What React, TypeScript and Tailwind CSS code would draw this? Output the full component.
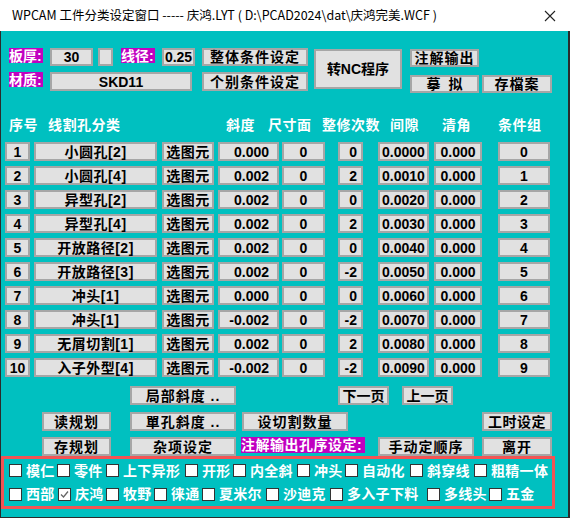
import React, { ReactNode } from "react";

const FONT = "font-['Liberation_Sans','Noto_Sans_CJK_SC',sans-serif]";

const Btn = ({ cls = "", children }: { cls?: string; children?: ReactNode }) => (
  <div
    className={`flex items-center justify-center shrink-0 bg-[#e1e1e1] border-2 border-[#a6a6a6] text-black font-bold text-[14px] leading-none whitespace-pre ${cls}`}
  >
    {children}
  </div>
);

const Tag = ({ cls = "", children }: { cls?: string; children?: ReactNode }) => (
  <div
    className={`flex items-center shrink-0 overflow-hidden whitespace-nowrap bg-[#c000c0] text-white font-bold text-[14px] leading-none h-[15px] ${cls}`}
  >
    {children}
  </div>
);

const rows = [
  ["1", "小圆孔[2]", "0.000", "0", "0", "0.0000", "0.000", "0"],
  ["2", "小圆孔[4]", "0.002", "0", "2", "0.0010", "0.000", "1"],
  ["3", "异型孔[2]", "0.002", "0", "0", "0.0020", "0.000", "2"],
  ["4", "异型孔[4]", "0.002", "0", "2", "0.0030", "0.000", "3"],
  ["5", "开放路径[2]", "0.002", "0", "0", "0.0040", "0.000", "4"],
  ["6", "开放路径[3]", "0.002", "0", "-2", "0.0050", "0.000", "5"],
  ["7", "冲头[1]", "0.000", "0", "0", "0.0060", "0.000", "6"],
  ["8", "冲头[1]", "-0.002", "0", "-2", "0.0070", "0.000", "7"],
  ["9", "无屑切割[1]", "0.002", "0", "2", "0.0080", "0.000", "8"],
  ["10", "入子外型[4]", "-0.002", "0", "-2", "0.0090", "0.000", "9"],
];

const headers = [
  { t: "序号", cls: "ml-[8px] w-[39px]" },
  { t: "线割孔分类", cls: "w-[178px]" },
  { t: "斜度", cls: "w-[42px]" },
  { t: "尺寸面", cls: "w-[54px]" },
  { t: "整修次数", cls: "w-[68px]" },
  { t: "间隙", cls: "w-[52px]" },
  { t: "清角", cls: "w-[56px]" },
  { t: "条件组", cls: "w-[60px]" },
];

const opts1 = [
  { t: "模仁", cls: "w-[48px]" },
  { t: "零件", cls: "w-[49px]" },
  { t: "上下异形", cls: "w-[79px]" },
  { t: "开形", cls: "w-[48px]" },
  { t: "内全斜", cls: "w-[64px]" },
  { t: "冲头", cls: "w-[48px]" },
  { t: "自动化", cls: "w-[65px]" },
  { t: "斜穿线", cls: "w-[64px]" },
  { t: "粗精一体", cls: "" },
];

const opts2 = [
  { t: "西部", cls: "w-[49px]" },
  { t: "庆鸿", cls: "w-[48px]", on: true },
  { t: "牧野", cls: "w-[48px]" },
  { t: "徕通", cls: "w-[48px]" },
  { t: "夏米尔", cls: "w-[64px]" },
  { t: "沙迪克", cls: "w-[64px]" },
  { t: "多入子下料", cls: "w-[97px]" },
  { t: "多线头", cls: "w-[62px]" },
  { t: "五金", cls: "" },
];

const Check = ({ t, cls, on }: { t: string; cls: string; on?: boolean }) => (
  <div className={`flex items-center shrink-0 ${cls}`}>
    <div className="w-[13px] h-[13px] bg-white border border-[#333] flex items-center justify-center">
      {on && (
        <svg width="11" height="11" viewBox="0 0 11 11">
          <polyline points="2,5.5 4.5,8 9,2.5" fill="none" stroke="#666" strokeWidth="1.3" />
        </svg>
      )}
    </div>
    <span className="ml-[4px] text-white font-bold text-[14px] leading-none tracking-[0.3px] whitespace-nowrap">{t}</span>
  </div>
);

export default function App() {
  return (
    <div className={`w-[570px] h-[521px] bg-white flex flex-col ${FONT}`}>
      <header className="h-[31px] shrink-0 flex items-center justify-between pl-[12px] pr-[14px] bg-white">
        <span className="text-[12.5px] text-black font-['Noto_Sans_CJK_SC',sans-serif]">
          WPCAM 工件分类设定窗口 ----- 庆鸿.LYT ( D:\PCAD2024\dat\庆鸿完美.WCF )
        </span>
        <svg width="12" height="12" viewBox="0 0 12 12">
          <path d="M1 1 L11 11 M11 1 L1 11" stroke="#222" strokeWidth="1.1" />
        </svg>
      </header>

      <main className="h-[487px] shrink-0 bg-[#00c0c0] border-l border-r-2 border-b border-[#2b2b2b] flex flex-col">
        {/* top settings */}
        <section className="flex items-start mt-[17px]">
          <div className="ml-[8px] flex flex-col">
            <div className="flex items-start">
              <Tag cls="w-[34px]">板厚:</Tag>
              <Btn cls="ml-[7px] w-[43px] h-[18px]">30</Btn>
              <Btn cls="ml-[5px] w-[15px] h-[18px]" />
              <Tag cls="ml-[8px] w-[34px]">线径:</Tag>
              <Btn cls="ml-[7px] w-[33px] h-[18px]">0.25</Btn>
              <Btn cls="ml-[7px] w-[106px] h-[18px] tracking-[1px]">整体条件设定</Btn>
            </div>
            <div className="flex items-start mt-[6px]">
              <Tag cls="w-[34px]">材质:</Tag>
              <Btn cls="ml-[7px] w-[142px] h-[19px]">SKD11</Btn>
              <Btn cls="ml-[10px] w-[106px] h-[19px] tracking-[1px]">个别条件设定</Btn>
            </div>
          </div>
          <Btn cls="ml-[6px] mt-[1px] w-[88px] h-[40px]">转NC程序</Btn>
          <div className="ml-[8px] mt-[1px] flex flex-col">
            <Btn cls="w-[69px] h-[18px] tracking-[1px]">注解输出</Btn>
            <div className="flex mt-[8px]">
              <Btn cls="w-[69px] h-[18px]">摹  拟</Btn>
              <Btn cls="ml-[3px] w-[70px] h-[18px] tracking-[1px]">存檔案</Btn>
            </div>
          </div>
        </section>

        {/* header */}
        <div className="flex items-center h-[20px] mt-[22px] text-white font-bold text-[14px] leading-none tracking-[0.5px] whitespace-nowrap">
          {headers.map((h) => (
            <span key={h.t} className={`shrink-0 ${h.cls}`}>
              {h.t}
            </span>
          ))}
        </div>

        {/* table */}
        <div className="flex flex-col gap-[5px] mt-[7px]">
          {rows.map((r) => (
            <div key={r[0]} className="flex h-[19px]">
              <Btn cls="ml-[4px] w-[25px]">{r[0]}</Btn>
              <Btn cls="ml-[4px] w-[123px] tracking-[0.5px]">{r[1]}</Btn>
              <Btn cls="ml-[5px] w-[52px] tracking-[0.5px]">选图元</Btn>
              <Btn cls="ml-[4px] w-[61px] !justify-end pr-[8px]">{r[2]}</Btn>
              <Btn cls="ml-[3px] w-[43px]">{r[3]}</Btn>
              <Btn cls="ml-[13px] w-[25px] !justify-end pr-[4px]">{r[4]}</Btn>
              <Btn cls="ml-[15px] w-[51px]">{r[5]}</Btn>
              <Btn cls="ml-[5px] w-[48px]">{r[6]}</Btn>
              <Btn cls="ml-[16px] w-[52px]">{r[7]}</Btn>
            </div>
          ))}
        </div>

        {/* bottom buttons */}
        <div className="flex mt-[9px] h-[19px]">
          <Btn cls="ml-[129px] w-[106px] tracking-[1px]">局部斜度 ..</Btn>
          <Btn cls="ml-[102px] w-[51px]">下一页</Btn>
          <Btn cls="ml-[13px] w-[51px]">上一页</Btn>
        </div>
        <div className="flex mt-[7px] h-[19px]">
          <Btn cls="ml-[41px] w-[69px] tracking-[1px]">读规划</Btn>
          <Btn cls="ml-[19px] w-[106px] tracking-[1px]">單孔斜度 ..</Btn>
          <Btn cls="ml-[6px] w-[106px] tracking-[1px]">设切割数量</Btn>
          <Btn cls="ml-[134px] w-[70px] tracking-[0.5px]">工时设定</Btn>
        </div>
        <div className="flex items-start mt-[6px] h-[19px]">
          <Btn cls="ml-[41px] w-[69px] h-[19px] tracking-[1px]">存规划</Btn>
          <Btn cls="ml-[19px] w-[106px] h-[19px] tracking-[1px]">杂项设定</Btn>
          <Tag cls="ml-[5px] w-[124px] !h-[16px] tracking-[0.5px]">注解输出孔序设定:</Tag>
          <Btn cls="ml-[13px] w-[96px] h-[19px] tracking-[1px]">手动定顺序</Btn>
          <Btn cls="ml-[8px] w-[70px] h-[19px] tracking-[1px]">离开</Btn>
        </div>

        {/* option checkboxes */}
        <div className="w-[554px] h-[53px] border-[3px] border-[#f25454] flex flex-col pl-[5px]">
          <div className="flex items-center h-[23px]">
            {opts1.map((o) => (
              <Check key={o.t} t={o.t} cls={o.cls} />
            ))}
          </div>
          <div className="flex items-center h-[24px]">
            {opts2.map((o) => (
              <Check key={o.t} t={o.t} cls={o.cls} on={o.on} />
            ))}
          </div>
        </div>
      </main>
    </div>
  );
}
